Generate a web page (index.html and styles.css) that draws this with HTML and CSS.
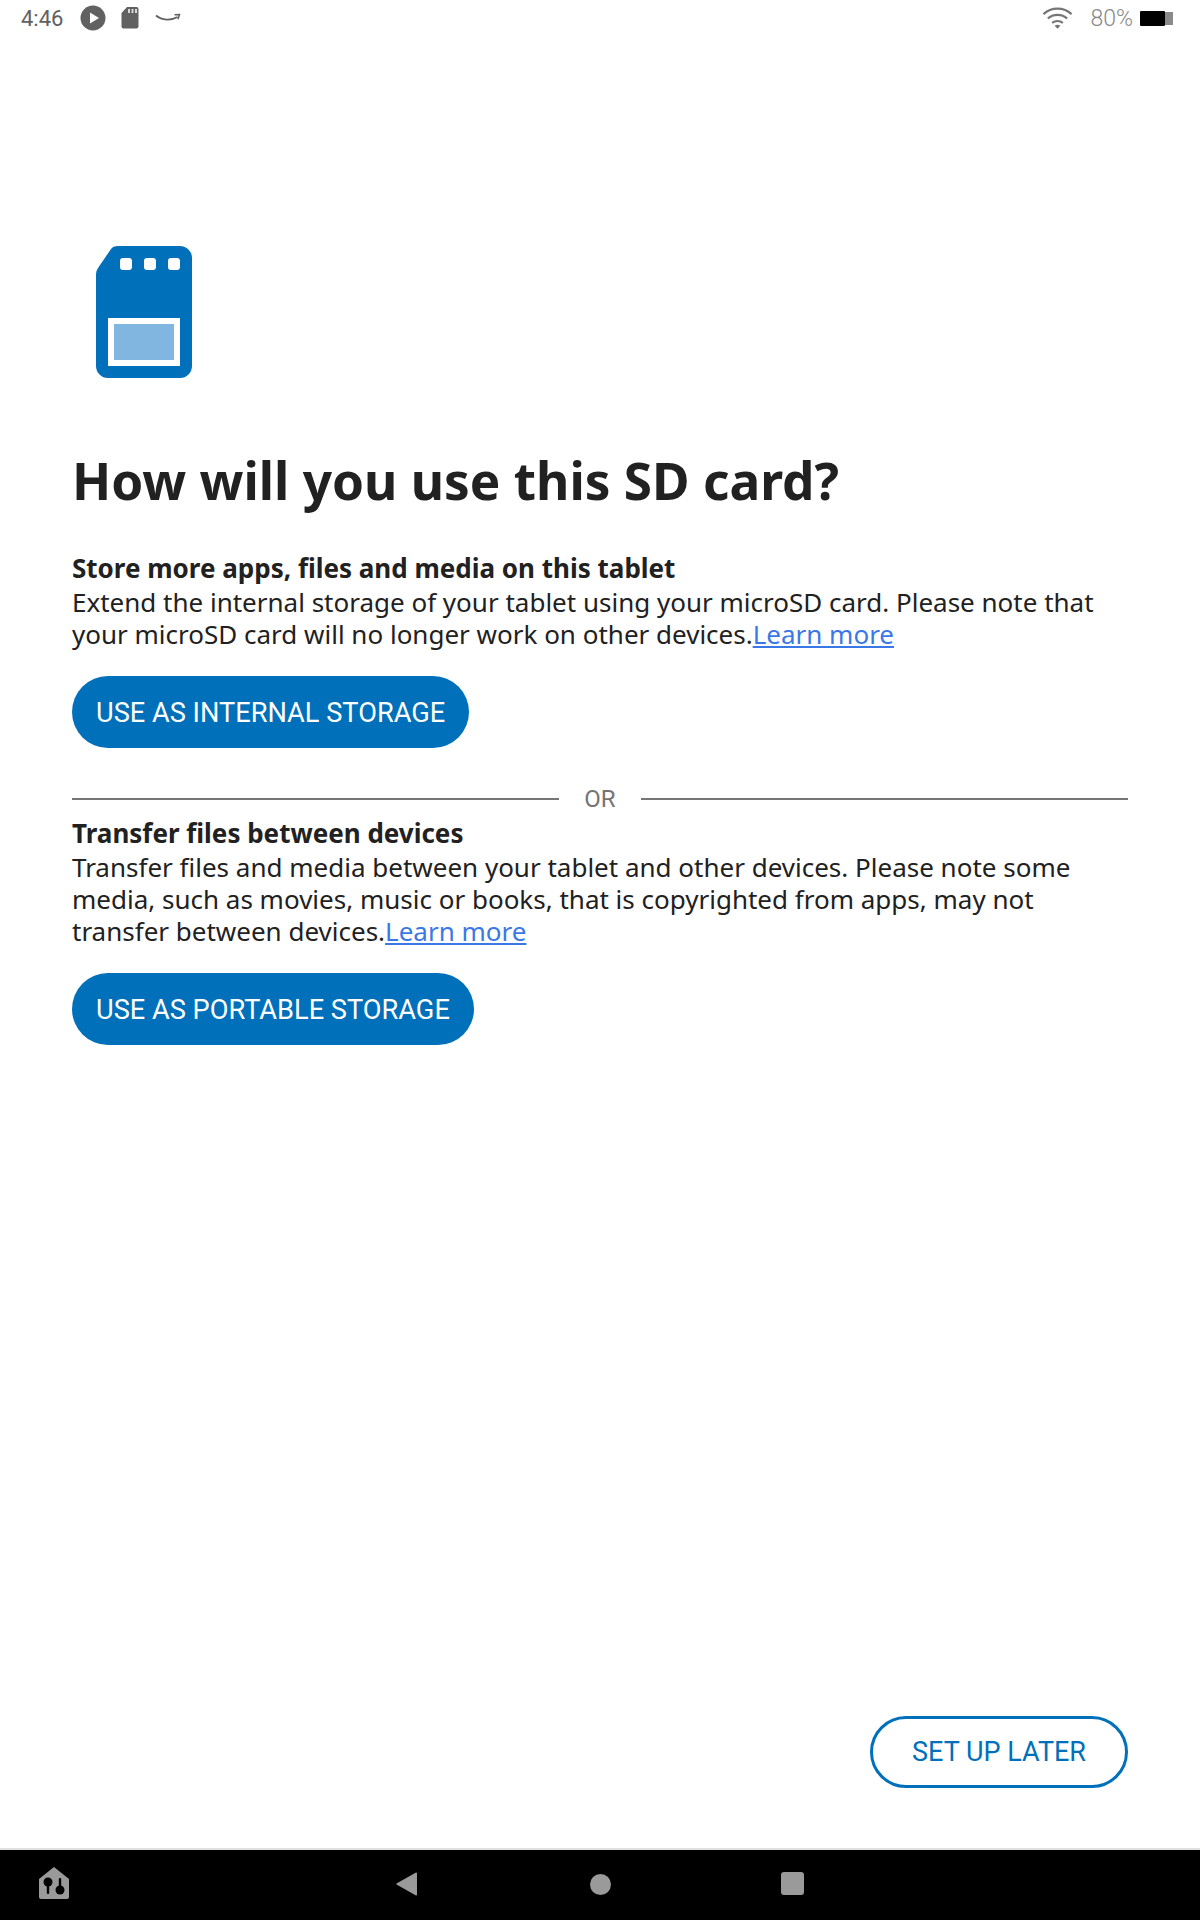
FILE: index.html
```html
<!DOCTYPE html>
<html lang="en">
<head>
    <meta charset="UTF-8">
    <meta name="viewport" content="width=device-width, initial-scale=1.0">
    <title>How will you use this SD card?</title>
    <link rel="stylesheet" href="styles.css">
</head>
<body>
    <div class="status-bar">
        <div class="status-left">
            <span class="time">4:46</span>
            <svg class="status-icon play" width="26" height="26" viewBox="0 0 26 26">
                <circle cx="13" cy="13" r="12.5" fill="#616161"/>
                <path d="M10 7.5 L19 13 L10 18.5 Z" fill="#fff"/>
            </svg>
            <svg class="status-icon sd" width="18" height="22" viewBox="0 0 18 22">
                <path d="M6 0 H15.5 A2 2 0 0 1 17.5 2 V19.5 A2 2 0 0 1 15.500 21.500 H2.500 A2 2 0 0 1 0.500 19.500 V6 Z" fill="#616161"/>
                <path d="M7 2 h2 v4 h-2 z M10.500 2 h2 v4 h-2 z M14 2 h2 v4 h-2 z" fill="#d8d8d8"/>
            </svg>
            <svg class="status-icon smile" width="26" height="12" viewBox="0 0 26 12">
                <path d="M1 3.500 C7 8.500 16 8.800 22.500 5" fill="none" stroke="#616161" stroke-width="1.800"/>
                <path d="M19.500 2.800 L24.500 2.500 L23 7.200" fill="none" stroke="#616161" stroke-width="1.500"/>
            </svg>
        </div>
        <div class="status-right">
            <svg class="wifi" width="32" height="24" viewBox="0 0 32 24">
                <g fill="none" stroke="#757575" stroke-width="2.200">
                    <path d="M1.500 8 C9.500 0.500 22.500 0.500 30.500 8"/>
                    <path d="M6 12.500 C11.500 7.500 20.500 7.500 26 12.500"/>
                    <path d="M10.500 17 C13.500 14.500 18.500 14.500 21.500 17"/>
                </g>
                <path d="M13 20 C15 18.500 17 18.500 19 20 L16 23 Z" fill="#757575"/>
            </svg>
            <span class="battery-text">80%</span>
            <div class="battery">
                <div class="battery-level"></div>
                <div class="battery-rest"></div>
            </div>
        </div>
    </div>

    <div class="main">
        <svg class="sd-card" width="96" height="132" viewBox="0 0 96 132">
            <path d="M22 0 H84 A12 12 0 0 1 96 12 V120 A12 12 0 0 1 84 132 H12 A12 12 0 0 1 0 120 V28 Q0 25 2 22 L15 3 Q17 0 22 0 Z" fill="#0070bb"/>
            <rect x="24" y="12" width="12" height="12" rx="3" fill="#fff"/>
            <rect x="48" y="12" width="12" height="12" rx="3" fill="#fff"/>
            <rect x="72" y="12" width="12" height="12" rx="3" fill="#fff"/>
            <rect x="12" y="72" width="72" height="48" fill="#fff"/>
            <rect x="18" y="78" width="60" height="36" fill="#80b6e0"/>
        </svg>

        <h1>How will you use this SD card?</h1>

        <h2>Store more apps, files and media on this tablet</h2>
        <p>Extend the internal storage of your tablet using your microSD card. Please note that your microSD card will no longer work on other devices.<a href="#">Learn more</a></p>
        <button class="btn">USE AS INTERNAL STORAGE</button>

        <div class="divider">
            <span class="line"></span>
            <span class="or">OR</span>
            <span class="line"></span>
        </div>

        <h2>Transfer files between devices</h2>
        <p>Transfer files and media between your tablet and other devices. Please note some media, such as movies, music or books, that is copyrighted from apps, may not transfer between devices.<a href="#">Learn more</a></p>
        <button class="btn">USE AS PORTABLE STORAGE</button>

        <div class="footer">
            <button class="btn-outline">SET UP LATER</button>
        </div>
    </div>

    <div class="nav-bar">
        <svg class="nav-home" width="30" height="32" viewBox="0 0 30 32">
            <path d="M15 0 L30 12 V30 A2 2 0 0 1 28 32 H2 A2 2 0 0 1 0 30 V12 Z" fill="#9a9a9a"/>
            <circle cx="9" cy="15" r="4.500" fill="#000"/>
            <rect x="7.800" y="17" width="2.400" height="10" rx="1" fill="#000"/>
            <circle cx="21" cy="23" r="4.500" fill="#000"/>
            <rect x="19.800" y="11" width="2.400" height="10" rx="1" fill="#000"/>
        </svg>
        <svg class="nav-back" width="21" height="24" viewBox="0 0 21 24">
            <path d="M20 0.500 Q21 0.200 21 1.500 V22.500 Q21 23.800 20 23.500 L0.500 12.500 Q0 12 0.500 11.500 Z" fill="#9a9a9a"/>
        </svg>
        <div class="nav-circle"></div>
        <div class="nav-square"></div>
    </div>
</body>
</html>
```

FILE: styles.css
```css
* {
    box-sizing: border-box;
}
body {
    margin: 0;
    width: 1200px;
    height: 1920px;
    display: flex;
    flex-direction: column;
    background-color: #fff;
    color: #212121;
    font-family: "Noto Sans", Arial, sans-serif;
}
.status-bar {
    height: 36px;
    display: flex;
    justify-content: space-between;
    align-items: center;
    padding: 0 26px 0 21px;
    font-family: Roboto, Arial, sans-serif;
    font-size: 22px;
}
.status-left, .status-right {
    display: flex;
    align-items: center;
}
.time {
    color: #616161;
    width: 59px;
}
.status-icon.play { margin-right: 15px; }
.status-icon.sd { margin-right: 16px; }
.wifi {
    width: 31px;
    margin-right: 17px;
}
.battery-text {
    color: #8a8a8a;
    font-size: 23px;
    font-weight: 300;
    margin-right: 7px;
}
.battery {
    display: flex;
    align-items: center;
    width: 34px;
    height: 15px;
}
.battery-level {
    width: 25px;
    height: 15px;
    background: #000;
    border-radius: 1px;
}
.battery-rest {
    width: 8px;
    height: 13px;
    background: #8a8a8a;
}
.main {
    flex: 1;
    display: flex;
    flex-direction: column;
    align-items: flex-start;
    padding: 210px 72px 60px 72px;
}
.sd-card {
    margin-left: 24px;
}
h1 {
    margin: 68px 0 0 0;
    font-size: 51.3px;
    line-height: 68px;
    font-weight: 700;
    color: #212121;
}
h2 {
    margin: 0;
    font-size: 26px;
    line-height: 32px;
    font-weight: 700;
}
.main > h1 + h2 {
    margin-top: 38px;
}
p {
    margin: 2px 0 0;
    font-size: 26px;
    line-height: 32px;
}
a {
    color: #3b78e7;
}
.btn {
    margin-top: 26px;
    height: 72px;
    padding: 1px 24px 0;
    border: none;
    border-radius: 36px;
    background-color: #0070bb;
    color: #fff;
    font-family: Roboto, Arial, sans-serif;
    font-size: 27.2px;
}
.divider {
    width: 100%;
    display: flex;
    align-items: center;
    gap: 24px;
    margin-top: 35px;
    height: 32px;
    margin-bottom: 2px;
}
.line {
    flex: 1;
    height: 2px;
    background: #757575;
}
.or {
    font-family: Roboto, Arial, sans-serif;
    font-size: 24px;
    color: #757575;
    padding: 0 1px;
}
.footer {
    margin-top: auto;
    width: 100%;
    display: flex;
    justify-content: flex-end;
}
.btn-outline {
    height: 72px;
    width: 258px;
    border: 3px solid #0070bb;
    border-radius: 36px;
    background: #fff;
    color: #0070bb;
    font-family: Roboto, Arial, sans-serif;
    font-size: 27px;
}
.nav-bar {
    position: relative;
    height: 72px;
    background: #000;
    border-top: 2px solid #e0e0e0;
}
.nav-home, .nav-back, .nav-circle, .nav-square {
    position: absolute;
}
.nav-home { left: 39px; top: 17px; }
.nav-back { left: 396px; top: 22px; }
.nav-circle {
    left: 590px;
    top: 24px;
    width: 21px;
    height: 21px;
    border-radius: 50%;
    background: #9a9a9a;
}
.nav-square {
    left: 781px;
    top: 22px;
    width: 23px;
    height: 23px;
    border-radius: 3px;
    background: #9a9a9a;
}
```
